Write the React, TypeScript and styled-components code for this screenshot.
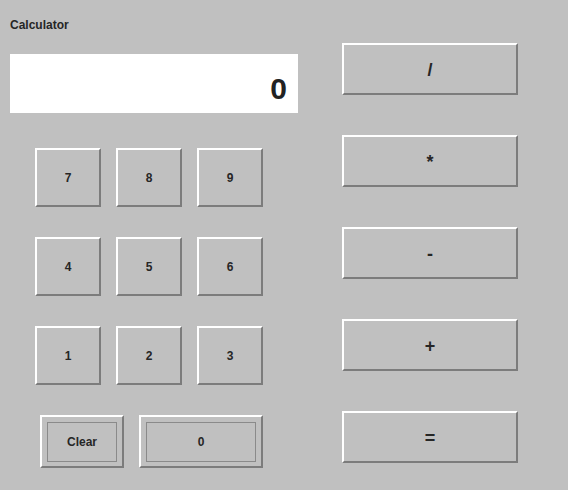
import React from "react";
import styled, { createGlobalStyle } from "styled-components";

const Global = createGlobalStyle`
  html, body { margin: 0; padding: 0; background: #c0c0c0; }
  body { font-family: "Liberation Sans", Arial, sans-serif; }
`;

const Frame = styled.div`
  width: 568px;
  height: 490px;
  display: flex;
  padding-left: 10px;
  box-sizing: border-box;
  background: #c0c0c0;
  color: #262626;
`;

const LeftCol = styled.div`
  width: 288px;
  display: flex;
  flex-direction: column;
`;

const Title = styled.div`
  height: 54px;
  box-sizing: border-box;
  padding-top: 18px;
  line-height: 14px;
  font-size: 12px;
  font-weight: bold;
`;

const Display = styled.div`
  height: 59px;
  background: #ffffff;
  box-sizing: border-box;
  display: flex;
  align-items: center;
  justify-content: flex-end;
  padding: 11px 11px 0 0;
  font-size: 30px;
  font-weight: bold;
  color: #222;
`;

const Keypad = styled.div`
  margin-top: 35px;
  margin-left: 25px;
  display: grid;
  grid-template-columns: repeat(3, 66px);
  grid-auto-rows: 59px;
  column-gap: 15px;
  row-gap: 30px;
`;

const BottomRow = styled.div`
  margin-top: 30px;
  margin-left: 30px;
  display: flex;
  gap: 15px;
  height: 53px;
`;

const Btn = styled.button<{ $w?: number; $size?: number }>`
  box-sizing: border-box;
  width: ${(p) => (p.$w ? `${p.$w}px` : "100%")};
  height: 100%;
  margin: 0;
  padding: 1px 0 0 0;
  background: #c0c0c0;
  border: 2px solid;
  border-color: #ffffff #7c7c7c #7c7c7c #ffffff;
  font-family: "Liberation Sans", Arial, sans-serif;
  font-weight: bold;
  font-size: ${(p) => p.$size ?? 12}px;
  color: #262626;
  display: flex;
  align-items: center;
  justify-content: center;
  cursor: default;
`;

const FocusBox = styled.span`
  flex: 1;
  align-self: stretch;
  margin: 4px 5px 4px 5px;
  border: 1px solid #8a8a8a;
  display: flex;
  align-items: center;
  justify-content: center;
`;

const RightCol = styled.div`
  margin-left: 44px;
  padding-top: 43px;
  display: flex;
  flex-direction: column;
  gap: 40px;
`;

const OpBtn = styled(Btn)`
  width: 176px;
  height: 52px;
  padding-top: 3px;
`;

const digits = ["7", "8", "9", "4", "5", "6", "1", "2", "3"];
const ops = ["/", "*", "-", "+", "="];

export default function App() {
  return (
    <>
      <Global />
      <Frame>
        <LeftCol>
          <Title>Calculator</Title>
          <Display>0</Display>
          <Keypad>
            {digits.map((d) => (
              <Btn key={d}>{d}</Btn>
            ))}
          </Keypad>
          <BottomRow>
            <Btn $w={84}>
              <FocusBox>Clear</FocusBox>
            </Btn>
            <Btn $w={124}>
              <FocusBox>0</FocusBox>
            </Btn>
          </BottomRow>
        </LeftCol>
        <RightCol>
          {ops.map((o) => (
            <OpBtn key={o} $size={18}>
              {o}
            </OpBtn>
          ))}
        </RightCol>
      </Frame>
    </>
  );
}
